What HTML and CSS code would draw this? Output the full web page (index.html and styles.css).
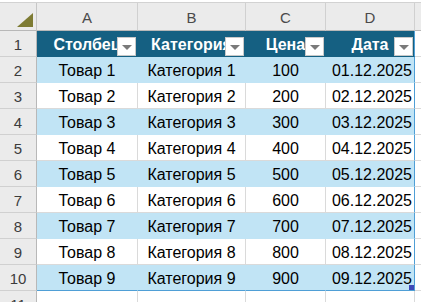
FILE: index.html
```html
<!DOCTYPE html>
<html lang="ru">
<head>
<meta charset="utf-8">
<title>Таблица</title>
<link rel="stylesheet" href="styles.css">
</head>
<body>
<div class="top"></div>
<div class="sheet">
  <div class="corner"><svg width="36" height="28" viewBox="0 0 36 28"><polygon points="33,10 33,24 17,24" fill="#7d7b33"/></svg></div>
  <div class="ch">A</div><div class="ch">B</div><div class="ch">C</div><div class="ch">D</div><div class="ch last"></div>

  <div class="rh">1</div>
  <div class="c th">Столбец<span class="dd"></span></div>
  <div class="c th">Категория<span class="dd"></span></div>
  <div class="c th">Цена<span class="dd"></span></div>
  <div class="c th end">Дата<span class="dd"></span></div>
  <div class="c out"></div>

  <div class="rh">2</div><div class="c b">Товар 1</div><div class="c b">Категория 1</div><div class="c b">100</div><div class="c b r end">01.12.2025</div><div class="c out"></div>
  <div class="rh">3</div><div class="c">Товар 2</div><div class="c">Категория 2</div><div class="c">200</div><div class="c r end">02.12.2025</div><div class="c out"></div>
  <div class="rh">4</div><div class="c b">Товар 3</div><div class="c b">Категория 3</div><div class="c b">300</div><div class="c b r end">03.12.2025</div><div class="c out"></div>
  <div class="rh">5</div><div class="c">Товар 4</div><div class="c">Категория 4</div><div class="c">400</div><div class="c r end">04.12.2025</div><div class="c out"></div>
  <div class="rh">6</div><div class="c b">Товар 5</div><div class="c b">Категория 5</div><div class="c b">500</div><div class="c b r end">05.12.2025</div><div class="c out"></div>
  <div class="rh">7</div><div class="c">Товар 6</div><div class="c">Категория 6</div><div class="c">600</div><div class="c r end">06.12.2025</div><div class="c out"></div>
  <div class="rh">8</div><div class="c b">Товар 7</div><div class="c b">Категория 7</div><div class="c b">700</div><div class="c b r end">07.12.2025</div><div class="c out"></div>
  <div class="rh">9</div><div class="c">Товар 8</div><div class="c">Категория 8</div><div class="c">800</div><div class="c r end">08.12.2025</div><div class="c out"></div>
  <div class="rh">10</div><div class="c b bot">Товар 9</div><div class="c b bot">Категория 9</div><div class="c b bot">900</div><div class="c b r end bot">09.12.2025<span class="handle"></span></div><div class="c out"></div>

  <div class="rh">11</div><div class="c"></div><div class="c"></div><div class="c"></div><div class="c"></div><div class="c out"></div>
</div>
</body>
</html>
```

FILE: styles.css
```css
* { box-sizing: border-box; }
html, body { margin: 0; padding: 0; background: #fff; overflow: hidden; }
body {
  width: 421px;
  height: 302px;
  font-family: "Liberation Sans", Arial, sans-serif;
  font-size: 16px;
  color: #000;
}
.top {
  height: 3px;
  background: #fff;
  border-bottom: 1px solid #d2d2d2;
}
.sheet {
  display: grid;
  grid-template-columns: 37px 101px 108px 80px 89px 1fr;
  grid-template-rows: 28px repeat(11, 26px);
}
.corner {
  background: #ebebeb;
  border-right: 1px solid #c6c6c6;
  border-bottom: 1px solid #b8b8b8;
}
.corner svg { display: block; }
.ch {
  background: #ebebeb;
  border-right: 1px solid #d0d0d0;
  border-bottom: 1px solid #b8b8b8;
  text-align: center;
  color: #4a4a4a;
  font-size: 15px;
  line-height: 27px;
  padding-top: 1px;
}
.ch.last { border-right: none; }
.rh {
  background: #ebebeb;
  border-right: 1px solid #b8b8b8;
  border-bottom: 1px solid #d0d0d0;
  text-align: center;
  color: #3c3c3c;
  font-size: 15px;
  padding-top: 2px;
  line-height: 24px;
}
.c {
  position: relative;
  border-right: 1px solid #dadada;
  border-bottom: 1px solid #dadada;
  text-align: center;
  white-space: nowrap;
  overflow: hidden;
  padding-top: 2px;
  line-height: 23px;
}
.c.b { background: #c1e4f5; border-right-color: #c1e4f5; border-bottom-color: #c1e4f5; }
.c.th {
  background: #156082;
  border-right-color: #156082;
  border-bottom-color: #156082;
  color: #fff;
  font-weight: bold;
}
.c.r { text-align: right; padding-right: 2px; }
.c.end { border-right: 1px solid #4f9fd6; }
.c.bot { border-bottom: 1px solid #4f9fd6; }
.c.out { border-right: none; }
.dd {
  position: absolute;
  right: 1px;
  bottom: 0;
  width: 19px;
  height: 19px;
  background: #fff;
  border: 1px solid #c9c9c9;
}
.dd::after {
  content: "";
  position: absolute;
  left: 4px;
  top: 7px;
  border-left: 5px solid transparent;
  border-right: 5px solid transparent;
  border-top: 5px solid #7a7a7a;
}
.handle {
  position: absolute;
  right: 0;
  bottom: 0;
  width: 5px;
  height: 5px;
  background: #3f49b8;
}
```
